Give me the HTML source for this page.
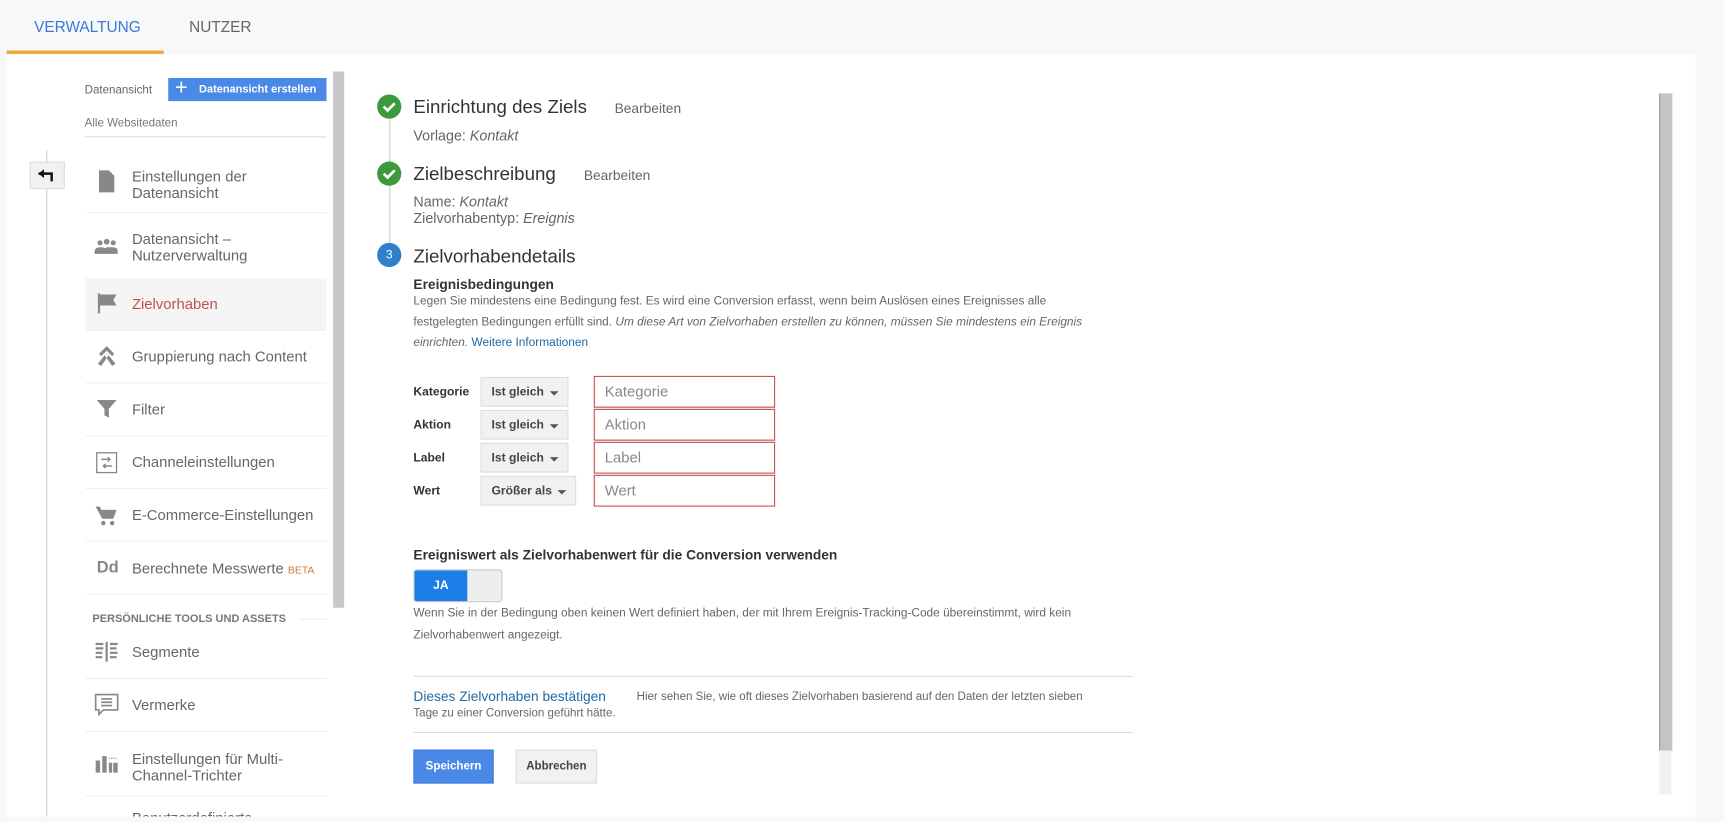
<!DOCTYPE html>
<html><head><meta charset="utf-8"><style>
html,body{margin:0;padding:0;width:1724px;height:822px;overflow:hidden;background:#f7f8fa;font-family:"Liberation Sans",Arial,sans-serif}
#s{position:absolute;left:0;top:0;width:1568px;height:748px;transform:scale(1.0995,1.099);transform-origin:0 0}
.a{position:absolute;white-space:nowrap}
.nav{font-size:13.5px;color:#666;left:120px}
.sep{position:absolute;left:78px;width:219px;height:1px;background:#eee}
.ic{position:absolute;left:86px}
.lbl{font-size:11px;font-weight:bold;color:#333;left:376px}
.sel{position:absolute;left:437px;width:80px;height:27px;background:#f1f1f1;border:1px solid #ddd;box-sizing:border-box;font-size:11px;font-weight:bold;color:#444;padding:7px 0 0 9px}
.sel:after{content:"";position:absolute;right:8px;top:12px;border:4px solid transparent;border-top:4px solid #555}
.inp{position:absolute;left:540px;width:165px;height:29px;border:1px solid #c0504d;box-sizing:border-box;font-size:13.5px;color:#888;padding:6px 0 0 9px;background:#fff}
.c{position:absolute;left:343px;width:22px;height:22px;border-radius:50%;background:#3c9a3c}
</style></head><body><div id="s">
<div class="a" style="left:31px;top:16px;font-size:14px;color:#3b78d8">VERWALTUNG</div>
<div class="a" style="left:172px;top:16px;font-size:14px;color:#666">NUTZER</div>
<div style="position:absolute;left:6px;top:46px;width:143px;height:3px;background:#f0a830"></div>
<div style="position:absolute;left:6px;top:50px;width:1536px;height:693px;background:#fff;overflow:hidden">
<div class="a nav" style="top:687px;left:114px">Benutzerdefinierte</div>
</div>
<!-- left rail -->
<div style="position:absolute;left:42px;top:137px;width:1px;height:606px;background:#ccc"></div>
<div style="position:absolute;left:27px;top:147px;width:32px;height:25px;background:#f1f1f1;border:1px solid #ddd;box-sizing:border-box"></div>
<svg style="position:absolute;left:34px;top:152px" width="18" height="14" viewBox="0 0 18 14"><path d="M1 6h12v7" stroke="#111" stroke-width="2.2" fill="none"/><path d="M1 6l5-4v8z" fill="#111"/></svg>
<!-- sidebar -->
<div class="a" style="left:77px;top:76px;font-size:10.5px;color:#666">Datenansicht</div>
<div class="a" style="left:153px;top:71px;width:144px;height:21px;background:#4a89e8;color:#fff;font-size:10px;font-weight:bold;line-height:21px;overflow:hidden"><span style="font-size:20px;font-weight:normal;position:absolute;left:6px;top:-1px">+</span><span style="position:absolute;left:28px">Datenansicht erstellen</span></div>
<div class="a" style="left:77px;top:106px;font-size:10.5px;color:#777">Alle Websitedaten</div>
<div style="position:absolute;left:77px;top:124px;width:220px;height:1px;background:#ddd"></div>
<div style="position:absolute;left:303px;top:65px;width:10px;height:488px;background:#c8c8c8"></div>
<div style="position:absolute;left:78px;top:253px;width:219px;height:47px;background:#f5f5f5"></div>
<div class="a nav" style="top:153px;line-height:15px">Einstellungen der<br>Datenansicht</div>
<div class="a nav" style="top:210px;line-height:15px">Datenansicht –<br>Nutzerverwaltung</div>
<div class="a nav" style="top:269px;color:#c0504d">Zielvorhaben</div>
<div class="a nav" style="top:317px">Gruppierung nach Content</div>
<div class="a nav" style="top:365px">Filter</div>
<div class="a nav" style="top:413px">Channeleinstellungen</div>
<div class="a nav" style="top:461px">E-Commerce-Einstellungen</div>
<div class="a nav" style="top:510px">Berechnete Messwerte <span style="font-size:9.5px;color:#d0783a">BETA</span></div>
<div class="a" style="left:84px;top:558px;font-size:10px;font-weight:bold;color:#777">PERSÖNLICHE TOOLS UND ASSETS</div>
<div style="position:absolute;left:272px;top:563px;width:25px;height:1px;background:#eee"></div>
<div class="a nav" style="top:586px">Segmente</div>
<div class="a nav" style="top:634px">Vermerke</div>
<div class="a nav" style="top:683px;line-height:15px">Einstellungen für Multi-<br>Channel-Trichter</div>
<div class="sep" style="top:193px"></div><div class="sep" style="top:300px"></div><div class="sep" style="top:348px"></div><div class="sep" style="top:396px"></div><div class="sep" style="top:444px"></div><div class="sep" style="top:492px"></div><div class="sep" style="top:540px"></div><div class="sep" style="top:617px"></div><div class="sep" style="top:665px"></div><div class="sep" style="top:724px"></div>
<!-- icons -->
<svg class="ic" style="top:154px" width="22" height="22" viewBox="0 0 22 22"><path d="M4 1h9l5 5v15H4z" fill="#888"/></svg>
<svg class="ic" style="top:216px" width="22" height="16" viewBox="0 0 22 16"><circle cx="5" cy="5" r="2.3" fill="#888"/><circle cx="11" cy="4" r="2.6" fill="#888"/><circle cx="17" cy="5" r="2.3" fill="#888"/><path d="M0 15v-3q1-3 5-3t5 1q1-1 1-1t5 0 5 3v3z" fill="#888"/></svg>
<svg class="ic" style="top:266px" width="22" height="20" viewBox="0 0 22 20"><path d="M3 1h2v18H3zM5 2h15l-3 5 3 5H5z" fill="#888"/></svg>
<svg class="ic" style="top:314px" width="22" height="20" viewBox="0 0 22 20"><path d="M11 1l7 7-2 2-5-5-5 5-2-2zM9 9l2-2 8 10-3 2zM13 9l-2-2-8 10 3 2z" fill="#888"/></svg>
<svg class="ic" style="top:363px" width="22" height="18" viewBox="0 0 22 18"><path d="M2 1h18l-7 8v8l-4-2V9z" fill="#888"/></svg>
<svg class="ic" style="top:410px" width="22" height="22" viewBox="0 0 22 22"><rect x="2" y="2" width="18" height="18" fill="none" stroke="#888" stroke-width="1.2"/><path d="M6 8h8M12 6l2 2-2 2M16 14H8M10 12l-2 2 2 2" stroke="#888" stroke-width="1.3" fill="none"/></svg>
<svg class="ic" style="top:459px" width="22" height="20" viewBox="0 0 22 20"><path d="M1 2h4l1 3h14l-3 8H7z" fill="#888"/><circle cx="8" cy="17" r="2" fill="#888"/><circle cx="16" cy="17" r="2" fill="#888"/></svg>
<div class="a" style="left:88px;top:508px;font-size:15px;font-weight:bold;color:#888">Dd</div>
<svg class="ic" style="top:583px" width="22" height="20" viewBox="0 0 22 20"><path d="M1 3h7M1 7h7M1 11h6M1 15h6M14 3h7M14 7h6M14 11h7M14 15h6M11 1v18" stroke="#888" stroke-width="2"/></svg>
<svg class="ic" style="top:631px" width="22" height="22" viewBox="0 0 22 22"><path d="M1 1h20v14H8l-4 4v-4H1z" fill="none" stroke="#888" stroke-width="1.5"/><path d="M6 5h10M6 8h10M6 11h10" stroke="#888" stroke-width="1.5"/></svg>
<svg class="ic" style="top:684px" width="22" height="20" viewBox="0 0 22 20"><path d="M1 8h4v11H1zM7 4h4v15H7zM13 10h3v9h-3zM17 10h4v9h-4z" fill="#888"/><path d="M13 6h8" stroke="#888" stroke-dasharray="1 1"/></svg>
<!-- steps -->
<div style="position:absolute;left:354px;top:108px;width:1px;height:130px;background:#ccc"></div>
<div class="c" style="top:86px"></div><div class="c" style="top:147px"></div>
<svg style="position:absolute;left:343px;top:86px" width="22" height="22"><path d="M6 11l3.5 3.5L16 8" stroke="#fff" stroke-width="2.4" fill="none"/></svg>
<svg style="position:absolute;left:343px;top:147px" width="22" height="22"><path d="M6 11l3.5 3.5L16 8" stroke="#fff" stroke-width="2.4" fill="none"/></svg>
<div style="position:absolute;left:343px;top:221px;width:22px;height:22px;border-radius:50%;background:#2f7fcb;color:#fff;font-size:11px;text-align:center;line-height:22px">3</div>
<div class="a" style="left:376px;top:88px;font-size:17px;color:#333">Einrichtung des Ziels</div>
<div class="a" style="left:559px;top:92px;font-size:12.5px;color:#666">Bearbeiten</div>
<div class="a" style="left:376px;top:116px;font-size:13px;color:#666">Vorlage: <i>Kontakt</i></div>
<div class="a" style="left:376px;top:149px;font-size:17px;color:#333">Zielbeschreibung</div>
<div class="a" style="left:531px;top:153px;font-size:12.5px;color:#666">Bearbeiten</div>
<div class="a" style="left:376px;top:176px;font-size:13px;color:#666;line-height:15px">Name: <i>Kontakt</i><br>Zielvorhabentyp: <i>Ereignis</i></div>
<div class="a" style="left:376px;top:224px;font-size:17px;color:#333">Zielvorhabendetails</div>
<div class="a" style="left:376px;top:252px;font-size:12.5px;font-weight:bold;color:#333">Ereignisbedingungen</div>
<div class="a" style="left:376px;top:265px;font-size:10.8px;color:#666;line-height:19px">Legen Sie mindestens eine Bedingung fest. Es wird eine Conversion erfasst, wenn beim Auslösen eines Ereignisses alle<br>festgelegten Bedingungen erfüllt sind. <i>Um diese Art von Zielvorhaben erstellen zu können, müssen Sie mindestens ein Ereignis<br>einrichten.</i> <span style="color:#1f6aa5">Weitere Informationen</span></div>
<div class="a lbl" style="top:351px">Kategorie</div><div class="a lbl" style="top:381px">Aktion</div><div class="a lbl" style="top:411px">Label</div><div class="a lbl" style="top:441px">Wert</div>
<div class="sel" style="top:343px">Ist gleich</div><div class="sel" style="top:373px">Ist gleich</div><div class="sel" style="top:403px">Ist gleich</div><div class="sel" style="top:433px;width:87px">Größer als</div>
<div class="inp" style="top:342px">Kategorie</div><div class="inp" style="top:372px">Aktion</div><div class="inp" style="top:402px">Label</div><div class="inp" style="top:432px">Wert</div>
<div class="a" style="left:376px;top:498px;font-size:12.5px;font-weight:bold;color:#333">Ereigniswert als Zielvorhabenwert für die Conversion verwenden</div>
<div style="position:absolute;left:376px;top:518px;width:81px;height:30px;border:1px solid #ccc;border-radius:3px;box-sizing:border-box;background:#eee;overflow:hidden"><div style="width:48px;height:30px;background:#1b7ee6;color:#fff;font-size:11px;font-weight:bold;text-align:center;line-height:28px">JA</div></div>
<div class="a" style="left:376px;top:548px;font-size:10.8px;color:#666;line-height:20px">Wenn Sie in der Bedingung oben keinen Wert definiert haben, der mit Ihrem Ereignis-Tracking-Code übereinstimmt, wird kein<br>Zielvorhabenwert angezeigt.</div>
<div style="position:absolute;left:376px;top:615px;width:654px;height:1px;background:#ddd"></div>
<div class="a" style="left:376px;top:627px;font-size:12.5px;color:#1f6aa5">Dieses Zielvorhaben bestätigen</div>
<div class="a" style="left:579px;top:628px;font-size:10.5px;color:#666">Hier sehen Sie, wie oft dieses Zielvorhaben basierend auf den Daten der letzten sieben</div>
<div class="a" style="left:376px;top:643px;font-size:10.5px;color:#666">Tage zu einer Conversion geführt hätte.</div>
<div style="position:absolute;left:376px;top:666px;width:654px;height:1px;background:#ddd"></div>
<div class="a" style="left:376px;top:682px;width:73px;height:31px;background:#4a89e8;border:1px solid #3a78d8;box-sizing:border-box;color:#fff;font-size:10.5px;font-weight:bold;text-align:center;line-height:29px">Speichern</div>
<div class="a" style="left:469px;top:682px;width:74px;height:31px;background:#f1f1f1;border:1px solid #ddd;box-sizing:border-box;color:#444;font-size:10.5px;font-weight:bold;text-align:center;line-height:29px">Abbrechen</div>
<!-- right scrollbar -->
<div style="position:absolute;left:1509px;top:85px;width:11px;height:598px;background:#c4c4c4;border-left:1px solid #999"></div>
<div style="position:absolute;left:1509px;top:683px;width:11px;height:40px;background:#f1f1f1"></div>
</div></body></html>
